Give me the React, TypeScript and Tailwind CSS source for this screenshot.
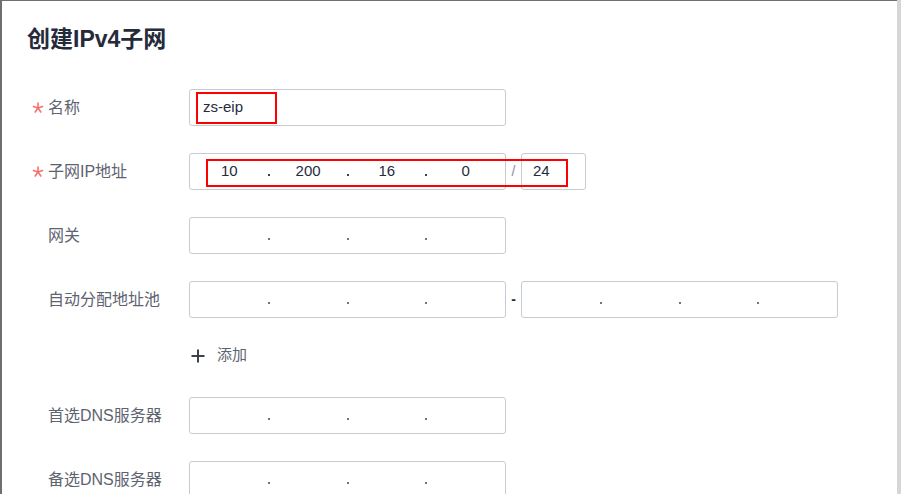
import React from "react";

const Star = () => (
  <svg width="12" height="12" viewBox="0 0 12 12" className="block">
    <g stroke="#f3726c" strokeWidth="1.6" strokeLinecap="butt">
      <line x1="6" y1="6" x2="6" y2="0.5" />
      <line x1="6" y1="6" x2="11.2" y2="4.3" />
      <line x1="6" y1="6" x2="9.2" y2="10.5" />
      <line x1="6" y1="6" x2="2.8" y2="10.5" />
      <line x1="6" y1="6" x2="0.8" y2="4.3" />
    </g>
  </svg>
);

function Label({ text, required }: { text: string; required?: boolean }) {
  return (
    <div className="w-[157px] flex items-center shrink-0">
      <div className="w-[16px] flex items-center">{required ? <Star /> : null}</div>
      <span className="text-[16px] leading-[20px] text-[#5e6370]">{text}</span>
    </div>
  );
}

function Dot({ dark }: { dark?: boolean }) {
  return (
    <div className="relative w-0 h-full">
      <div
        className={`absolute left-[-1px] top-[20px] w-[2px] h-[2px] ${
          dark ? "bg-[#3c414b]" : "bg-[#6f747e]"
        }`}
      />
    </div>
  );
}

function IpInput({ values }: { values?: string[] }) {
  const v = values ?? ["", "", "", ""];
  const dark = !!values;
  return (
    <div className="w-[317px] h-[37px] border border-[#c6cad2] rounded-[3px] flex items-stretch bg-white">
      {v.map((s, i) => (
        <React.Fragment key={i}>
          {i > 0 && <Dot dark={dark} />}
          <div className="flex-1 flex items-center justify-center text-[15px] text-[#252b3a]">{s}</div>
        </React.Fragment>
      ))}
    </div>
  );
}

export default function App() {
  return (
    <div className="relative w-[901px] h-[494px] overflow-hidden flex bg-white font-['Liberation_Sans','Noto_Sans_CJK_SC',sans-serif]">
      <div className="flex-1 border-l-2 border-t border-[#6f6f6f] pt-[22px]">
        <div className="pl-[25px] text-[23px] font-bold leading-[32px] text-[#252b3a]">创建IPv4子网</div>
        <div className="mt-[34px] pl-[30px] flex flex-col gap-[27px]">
          <div className="flex items-center h-[37px]">
            <Label text="名称" required />
            <div className="w-[317px] h-[37px] border border-[#c6cad2] rounded-[3px] flex items-center pl-[13px] text-[15px] text-[#252b3a]">
              zs-eip
            </div>
          </div>
          <div className="flex items-center h-[37px]">
            <Label text="子网IP地址" required />
            <IpInput values={["10", "200", "16", "0"]} />
            <div className="w-[15px] text-center text-[14px] text-[#8a8e99]">/</div>
            <div className="w-[65px] h-[37px] border border-[#c6cad2] rounded-[3px] flex items-center pl-[11px] text-[15px] text-[#252b3a]">
              24
            </div>
          </div>
          <div className="flex items-center h-[37px]">
            <Label text="网关" />
            <IpInput />
          </div>
          <div className="flex items-center h-[37px]">
            <Label text="自动分配地址池" />
            <IpInput />
            <div className="w-[15px] text-center text-[14px] text-[#252b3a] font-bold">-</div>
            <IpInput />
          </div>
          <div className="flex items-center h-[25px] pb-[4px] pl-[159px]">
            <svg width="14" height="14" viewBox="0 0 14 14" className="block">
              <path d="M7 0.5V13.5M0.5 7H13.5" stroke="#3c414b" strokeWidth="2" />
            </svg>
            <span className="ml-[12px] text-[15px] text-[#5e6370]">添加</span>
          </div>
          <div className="flex items-center h-[37px]">
            <Label text="首选DNS服务器" />
            <IpInput />
          </div>
          <div className="flex items-center h-[37px]">
            <Label text="备选DNS服务器" />
            <IpInput />
          </div>
        </div>
      </div>
      <div className="w-[4px] h-full bg-[#d6d6d6]" />
      <div className="absolute left-[196px] top-[92px] w-[81px] h-[32px] border-2 border-[#ff0000]" />
      <div className="absolute left-[206px] top-[159px] w-[362px] h-[28px] border-2 border-[#ff0000]" />
    </div>
  );
}
